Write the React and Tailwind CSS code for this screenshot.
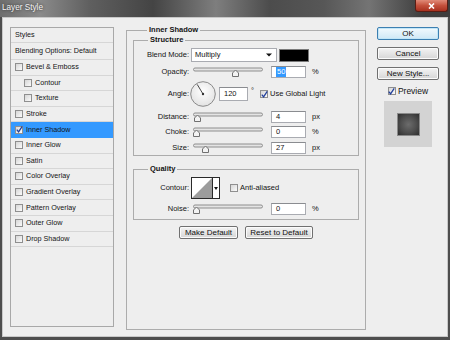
import React from "react";

const styles = [
  { name: "Bevel & Emboss" },
  { name: "Contour", indent: true },
  { name: "Texture", indent: true },
  { name: "Stroke" },
  { name: "Inner Shadow", checked: true, selected: true },
  { name: "Inner Glow" },
  { name: "Satin" },
  { name: "Color Overlay" },
  { name: "Gradient Overlay" },
  { name: "Pattern Overlay" },
  { name: "Outer Glow" },
  { name: "Drop Shadow" },
];

function Check({ checked }) {
  return (
    <span className="w-[8px] h-[8px] shrink-0 border border-[#8f8f8f] bg-gradient-to-br from-[#d6d6d6] to-[#fbfbfb] flex items-center justify-center">
      {checked && (
        <svg width="7" height="7" viewBox="0 0 7 7" className="overflow-visible">
          <path d="M0.8 3.6 L2.6 5.8 L6.2 0.4" fill="none" stroke="#22409c" strokeWidth="1.3" />
        </svg>
      )}
    </span>
  );
}

function Slider({ pos }) {
  return (
    <svg width="70" height="12" className="ml-[4px] shrink-0">
      <rect x="0.5" y="2" width="69" height="3" rx="1.5" fill="#e4e4e4" stroke="#8e8e8e" strokeWidth="1" />
      <path
        d={`M${pos + 0.5} 7 L${pos + 3.5} 4 L${pos + 6.5} 7 L${pos + 6.5} 10.5 L${pos + 0.5} 10.5 Z`}
        fill="#f3f3f3"
        stroke="#707070"
        strokeWidth="1"
      />
    </svg>
  );
}

function Field({ children, className }) {
  return (
    <div className={"h-[12px] bg-white border border-[#a9abb1] border-t-[#8a8c90] flex items-center pl-[4px] shrink-0 " + className}>
      {children}
    </div>
  );
}

function Label({ children }) {
  return <span className="w-[55px] shrink-0 text-right">{children}</span>;
}

function SliderRow({ label, pos, value, unit, className }) {
  return (
    <div className={"flex items-center h-[12px] " + className}>
      <Label>{label}</Label>
      <Slider pos={pos} />
      <Field className="w-[35px] ml-[8px]">{value}</Field>
      <span className="ml-[6px]">{unit}</span>
    </div>
  );
}

function Button({ children, primary, className }) {
  return (
    <div
      className={
        "h-[13px] rounded-[2px] border flex items-center justify-center text-[8px] text-[#111] " +
        (primary
          ? "border-[#3c7fb1] bg-gradient-to-b from-[#f2f9fd] to-[#cfe8f6] shadow-[inset_0_0_0_1px_#c2e6f8] "
          : "border-[#707070] bg-gradient-to-b from-[#f4f4f4] to-[#d6d6d6] shadow-[inset_0_0_0_1px_#fbfbfb] ") +
        className
      }
    >
      {children}
    </div>
  );
}

export default function App() {
  return (
    <div className="w-[450px] h-[340px] bg-[#4d4d4d] flex flex-col font-['Liberation_Sans',Arial,sans-serif] text-[7.5px] leading-[10px] text-[#141414] overflow-hidden">
      {/* title bar */}
      <div className="h-[17px] shrink-0 flex items-start justify-between bg-[linear-gradient(90deg,#6e6e6e_0%,#8a8a8a_9%,#5f5f5f_20%,#444_34%,#7e7e7e_48%,#4c4c4c_60%,#575757_72%,#747474_82%,#3e3e3e_94%)]">
        <span className="ml-[2px] mt-[3px] text-[8.2px] leading-[10px] text-[#f4f4f4] [text-shadow:0_0_3px_#222]">
          Layer Style
        </span>
        <div className="mr-[2px] w-[33px] h-[12px] rounded-b-[3px] border border-t-0 border-[#5a1d14] bg-gradient-to-b from-[#e08a78] via-[#c4503c] to-[#a8301f] flex items-center justify-center">
          <svg width="7" height="6" viewBox="0 0 7 6">
            <path d="M1 0.5 L6 5.5 M6 0.5 L1 5.5" stroke="#fff" strokeWidth="1.6" />
          </svg>
        </div>
      </div>

      {/* body */}
      <div className="flex-1 mx-[2px] mb-[3px] bg-[#eeeeee] border border-[#c8c8c8] flex items-start pl-[7px]">
        {/* styles list */}
        <div className="mt-[9px] w-[104px] h-[300px] shrink-0 border border-[#a8a8a8] flex flex-col">
          <div className="h-[15px] shrink-0 border-b border-[#d6d6d6] flex items-center pl-[4px] text-[7.2px]">Styles</div>
          <div className="h-[17px] shrink-0 border-b border-[#d6d6d6] flex items-center pl-[4px] text-[7.2px]">
            Blending Options: Default
          </div>
          {styles.map((s) => (
            <div
              key={s.name}
              className={
                "h-[15.6px] shrink-0 border-b flex items-center gap-[3px] text-[7.2px] " +
                (s.indent ? "pl-[13px] " : "pl-[4px] ") +
                (s.selected ? "bg-[#3399ff] border-[#3399ff]" : "border-[#d6d6d6]")
              }
            >
              <Check checked={s.checked} />
              <span>{s.name}</span>
            </div>
          ))}
        </div>

        {/* main panel */}
        <fieldset className="ml-[12px] mt-[7px] w-[240px] h-[305px] shrink-0 border border-[#acacac] px-[6px]">
          <legend className="ml-[14px] px-[2px] font-bold">Inner Shadow</legend>

          <fieldset className="border border-[#acacac] pb-[1px]">
            <legend className="ml-[14px] px-[2px] font-bold">Structure</legend>

            <div className="flex items-center h-[14px] mt-[3px]">
              <Label>Blend Mode:</Label>
              <div className="ml-[2px] w-[86px] h-[14px] bg-white border border-[#a9abb1] flex items-center justify-between pl-[3px] pr-[4px]">
                <span>Multiply</span>
                <svg width="6" height="4" viewBox="0 0 6 4">
                  <path d="M0 0.5 H6 L3 3.5 Z" fill="#111" />
                </svg>
              </div>
              <div className="ml-[2px] w-[30px] h-[13px] bg-black border border-[#7a7a7a]" />
            </div>

            <div className="flex items-center h-[12px] mt-[4px]">
              <Label>Opacity:</Label>
              <Slider pos={39} />
              <Field className="w-[35px] ml-[8px]">
                <span className="bg-[#3399ff] text-white px-[1px]">50</span>
              </Field>
              <span className="ml-[6px]">%</span>
            </div>

            <div className="flex items-center h-[26px] mt-[3px]">
              <Label>Angle:</Label>
              <svg width="26" height="26" viewBox="0 0 26 26" className="ml-[1px] shrink-0">
                <defs>
                  <radialGradient id="dial" cx="50%" cy="40%" r="60%">
                    <stop offset="0%" stopColor="#ffffff" />
                    <stop offset="100%" stopColor="#e2e2e2" />
                  </radialGradient>
                </defs>
                <circle cx="13" cy="13" r="12.3" fill="url(#dial)" stroke="#8a8a8a" strokeWidth="1" />
                <line x1="13" y1="13" x2="7.2" y2="3.4" stroke="#333" strokeWidth="0.9" />
                <circle cx="13" cy="13" r="1.2" fill="#333" />
              </svg>
              <Field className="w-[29px] ml-[3px] h-[14px]">120</Field>
              <span className="ml-[3px] self-start mt-[7px] leading-[6px]">°</span>
              <span className="ml-[6px]">
                <Check checked />
              </span>
              <span className="ml-[2px]">Use Global Light</span>
            </div>

            <SliderRow label="Distance:" pos={1} value="4" unit="px" className="mt-[4px]" />
            <SliderRow label="Choke:" pos={0} value="0" unit="%" className="mt-[3px]" />
            <SliderRow label="Size:" pos={9} value="27" unit="px" className="mt-[4px]" />
          </fieldset>

          <fieldset className="mt-[8px] border border-[#acacac] pb-[4px]">
            <legend className="ml-[14px] px-[2px] font-bold">Quality</legend>

            <div className="flex items-center h-[22px] mt-[3px]">
              <Label>Contour:</Label>
              <div className="ml-[2px] w-[29px] h-[22px] border border-[#2a2a2a] bg-white flex">
                <svg width="20" height="20" viewBox="0 0 20 20" className="shrink-0">
                  <path d="M0 20 L20 0 L20 20 Z" fill="#9c9c9c" />
                </svg>
                <div className="flex-1 border-l border-[#2a2a2a] flex items-center justify-center">
                  <svg width="4" height="3" viewBox="0 0 4 3">
                    <path d="M0 0 H4 L2 3 Z" fill="#111" />
                  </svg>
                </div>
              </div>
              <span className="ml-[10px]">
                <Check />
              </span>
              <span className="ml-[2px]">Anti-aliased</span>
            </div>

            <SliderRow label="Noise:" pos={0} value="0" unit="%" className="mt-[4px]" />
          </fieldset>

          <div className="mt-[6px] flex justify-center gap-[7px]">
            <Button className="w-[59px] text-[7px]">Make Default</Button>
            <Button className="w-[68px] text-[7px]">Reset to Default</Button>
          </div>
        </fieldset>

        {/* right column */}
        <div className="ml-[11px] mt-[9px] w-[62px] shrink-0 flex flex-col items-stretch">
          <Button primary>OK</Button>
          <Button className="mt-[7px]">Cancel</Button>
          <Button className="mt-[7px]">New Style...</Button>
          <div className="mt-[6px] h-[10px] flex items-center justify-center gap-[2px] text-[8.5px]">
            <Check checked />
            <span>Preview</span>
          </div>
          <div className="mt-[5px] self-center w-[48px] h-[46px] bg-[#d3d3d3] flex items-center justify-center">
            <div className="w-[23px] h-[23px] border border-[#8a8a8a] bg-[radial-gradient(circle,#6c6c6c_0%,#4d4d4d_55%,#2e2e2e_100%)]" />
          </div>
        </div>
      </div>
    </div>
  );
}
